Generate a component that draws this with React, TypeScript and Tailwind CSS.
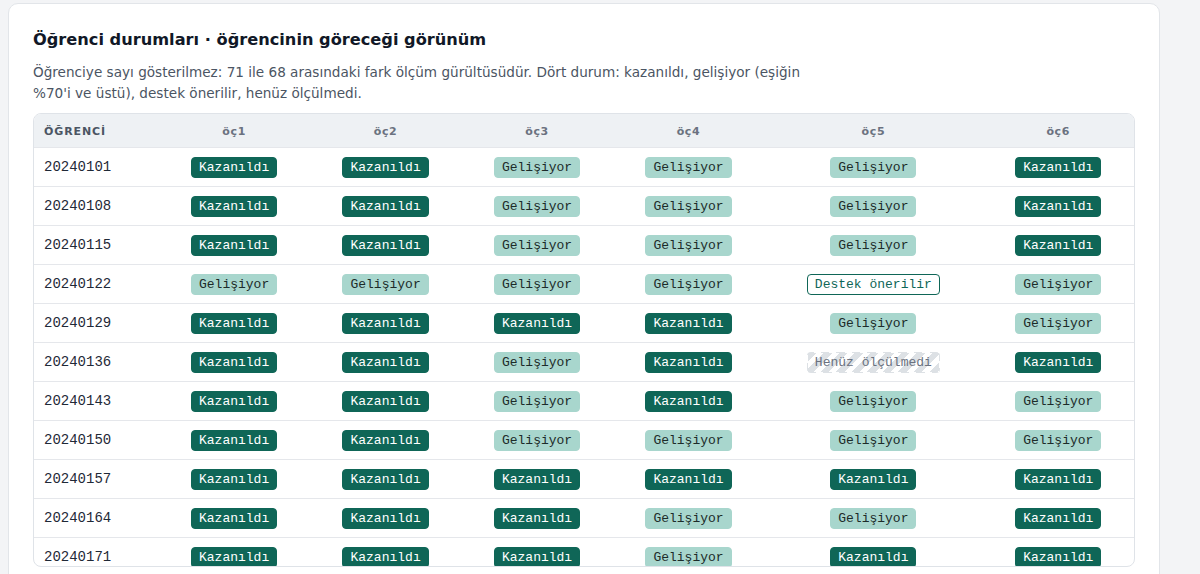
type Status = "K" | "G" | "D" | "H";

const rows: [string, Status[]][] = [
  ["20240101", ["K", "K", "G", "G", "G", "K"]],
  ["20240108", ["K", "K", "G", "G", "G", "K"]],
  ["20240115", ["K", "K", "G", "G", "G", "K"]],
  ["20240122", ["G", "G", "G", "G", "D", "G"]],
  ["20240129", ["K", "K", "K", "K", "G", "G"]],
  ["20240136", ["K", "K", "G", "K", "H", "K"]],
  ["20240143", ["K", "K", "G", "K", "G", "G"]],
  ["20240150", ["K", "K", "G", "G", "G", "G"]],
  ["20240157", ["K", "K", "K", "K", "K", "K"]],
  ["20240164", ["K", "K", "K", "G", "G", "K"]],
  ["20240171", ["K", "K", "K", "G", "K", "K"]],
];

const columns = ["öç1", "öç2", "öç3", "öç4", "öç5", "öç6"];

function Badge({ status }: { status: Status }) {
  const base =
    "inline-block align-middle rounded-[4px] border px-[7px] text-[13px] leading-[19px] font-['Liberation_Mono',monospace] whitespace-nowrap";

  if (status === "K") {
    return <span className={`${base} border-[#0f6657] bg-[#0f6657] text-white`}>Kazanıldı</span>;
  }
  if (status === "G") {
    return <span className={`${base} border-[#a8d6cd] bg-[#a8d6cd] text-[#1c2b29]`}>Gelişiyor</span>;
  }
  if (status === "D") {
    return (
      <span className={`${base} border-[1.5px] border-[#0f6657] bg-white text-[#0f6657]`}>Destek önerilir</span>
    );
  }
  return (
    <span
      className={`${base} border-transparent bg-[repeating-linear-gradient(135deg,#dde1e5_0_6px,#ffffff_6px_11px)] text-[#6b7280]`}
    >
      Henüz ölçülmedi
    </span>
  );
}

export default function App() {
  return (
    <main className="min-h-screen bg-[#f3f4f6] pl-2 pt-[3px] font-['DejaVu_Sans',sans-serif]">
      <section className="w-[1152px] rounded-[10px] border border-[#e2e5e9] bg-white px-6 pt-[22px] pb-6">
        <h1 className="text-[16.2px] leading-7 font-bold text-[#111827]">
          Öğrenci durumları · öğrencinin göreceği görünüm
        </h1>
        <p className="mt-2 max-w-[790px] text-[13.6px] leading-[21px] text-[#4b5563]">
          Öğrenciye sayı gösterilmez: 71 ile 68 arasındaki fark ölçüm gürültüsüdür. Dört durum: kazanıldı, gelişiyor
          (eşiğin %70'i ve üstü), destek önerilir, henüz ölçülmedi.
        </p>

        <div className="mt-[9px] h-[454px] overflow-hidden rounded-[8px] border border-[#dfe3e8]">
          <table className="w-full border-collapse">
            <thead>
              <tr className="bg-[#eef1f4]">
                <th className="h-[33px] px-2.5 pt-1 text-left text-[11px] font-bold tracking-[0.08em] text-[#4b5563]">
                  ÖĞRENCİ
                </th>
                {columns.map((col) => (
                  <th
                    key={col}
                    className="px-2.5 pt-1 text-center text-[11px] font-bold tracking-[0.06em] text-[#6b7280]"
                  >
                    {col}
                  </th>
                ))}
              </tr>
            </thead>
            <tbody>
              {rows.map(([id, statuses]) => (
                <tr key={id} className="border-t border-[#e5e7eb]">
                  <td className="px-2.5 py-2 text-left align-middle text-[14px] leading-[22px] font-['Liberation_Mono',monospace] text-[#1f2937]">
                    {id}
                  </td>
                  {statuses.map((s, i) => (
                    <td key={i} className="px-2.5 py-2 text-center align-middle leading-[22px]">
                      <Badge status={s} />
                    </td>
                  ))}
                </tr>
              ))}
            </tbody>
          </table>
        </div>
      </section>
    </main>
  );
}
